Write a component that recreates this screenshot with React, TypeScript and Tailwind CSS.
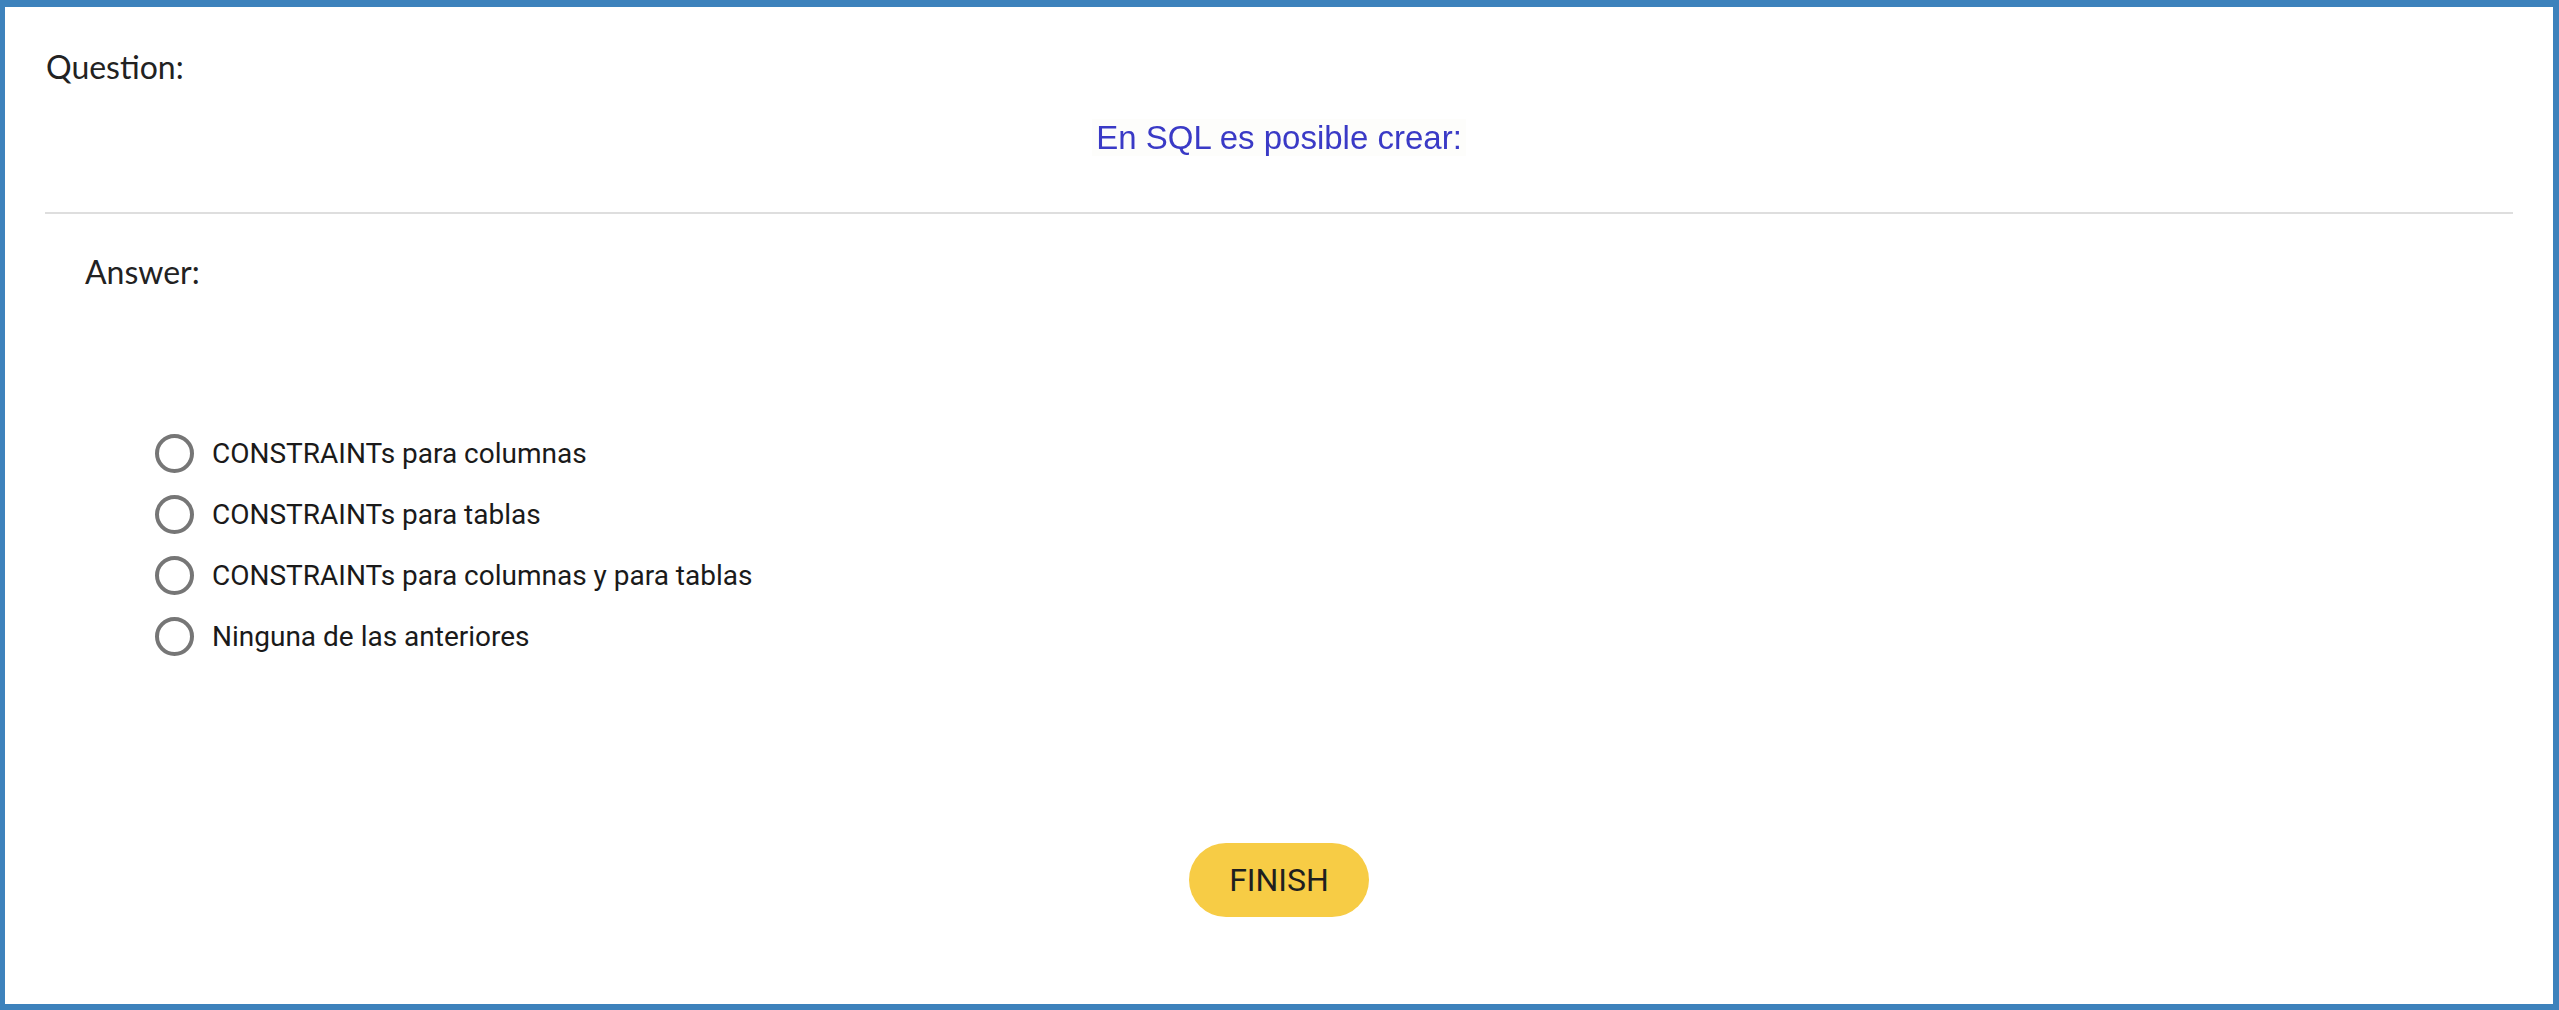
import React, { useState } from 'react';

const options = [
  'CONSTRAINTs para columnas',
  'CONSTRAINTs para tablas',
  'CONSTRAINTs para columnas y para tablas',
  'Ninguna de las anteriores',
];

const App: React.FC = () => {
  const [selected, setSelected] = useState<number | null>(null);

  return (
    <div className="h-screen w-full bg-white border-t-[7px] border-l-[5px] border-r-[6px] border-b-[6px] border-[#3d82bc] overflow-hidden">
      <div className="px-[40px] pt-[41px]">
        <div className="pl-[1px] text-[32px] leading-[38px] text-[#222] font-['Lato','Liberation_Sans',sans-serif]">Question:</div>
        <div className="flex justify-center mt-[33px]">
          <div className="px-[4px] h-[37px] bg-[#fdfdfb] text-[33px] leading-[37px] text-[#3a3ac6] font-['Liberation_Sans','Arial',sans-serif] blur-[0.4px]">
            En SQL es posible crear:
          </div>
        </div>
        <div className="mt-[56px] h-[2px] bg-[#dedede]" />
        <div className="pl-[40px] mt-[39px] text-[32px] leading-[38px] text-[#222] font-['Lato','Liberation_Sans',sans-serif]">Answer:</div>
        <div className="mt-[132px] pl-[110px] flex flex-col font-['Roboto','Liberation_Sans',sans-serif]">
          {options.map((opt, i) => (
            <label key={opt} className="h-[61px] flex items-center gap-[18px] cursor-pointer" onClick={() => setSelected(i)}>
              <span className="w-[39px] h-[39px] rounded-full border-[4px] border-[#767676] flex items-center justify-center">
                {selected === i && <span className="w-[19px] h-[19px] rounded-full bg-[#767676]" />}
              </span>
              <span className="text-[28px] text-[#1a1a1a]">{opt}</span>
            </label>
          ))}
        </div>
      </div>
      <div className="flex justify-center mt-[176px]">
        <button className="w-[180px] h-[74px] rounded-full bg-[#f7cc45] text-[32px] text-[#1f1f1f] font-['Roboto','Liberation_Sans',sans-serif]">
          FINISH
        </button>
      </div>
    </div>
  );
};

export default App;
